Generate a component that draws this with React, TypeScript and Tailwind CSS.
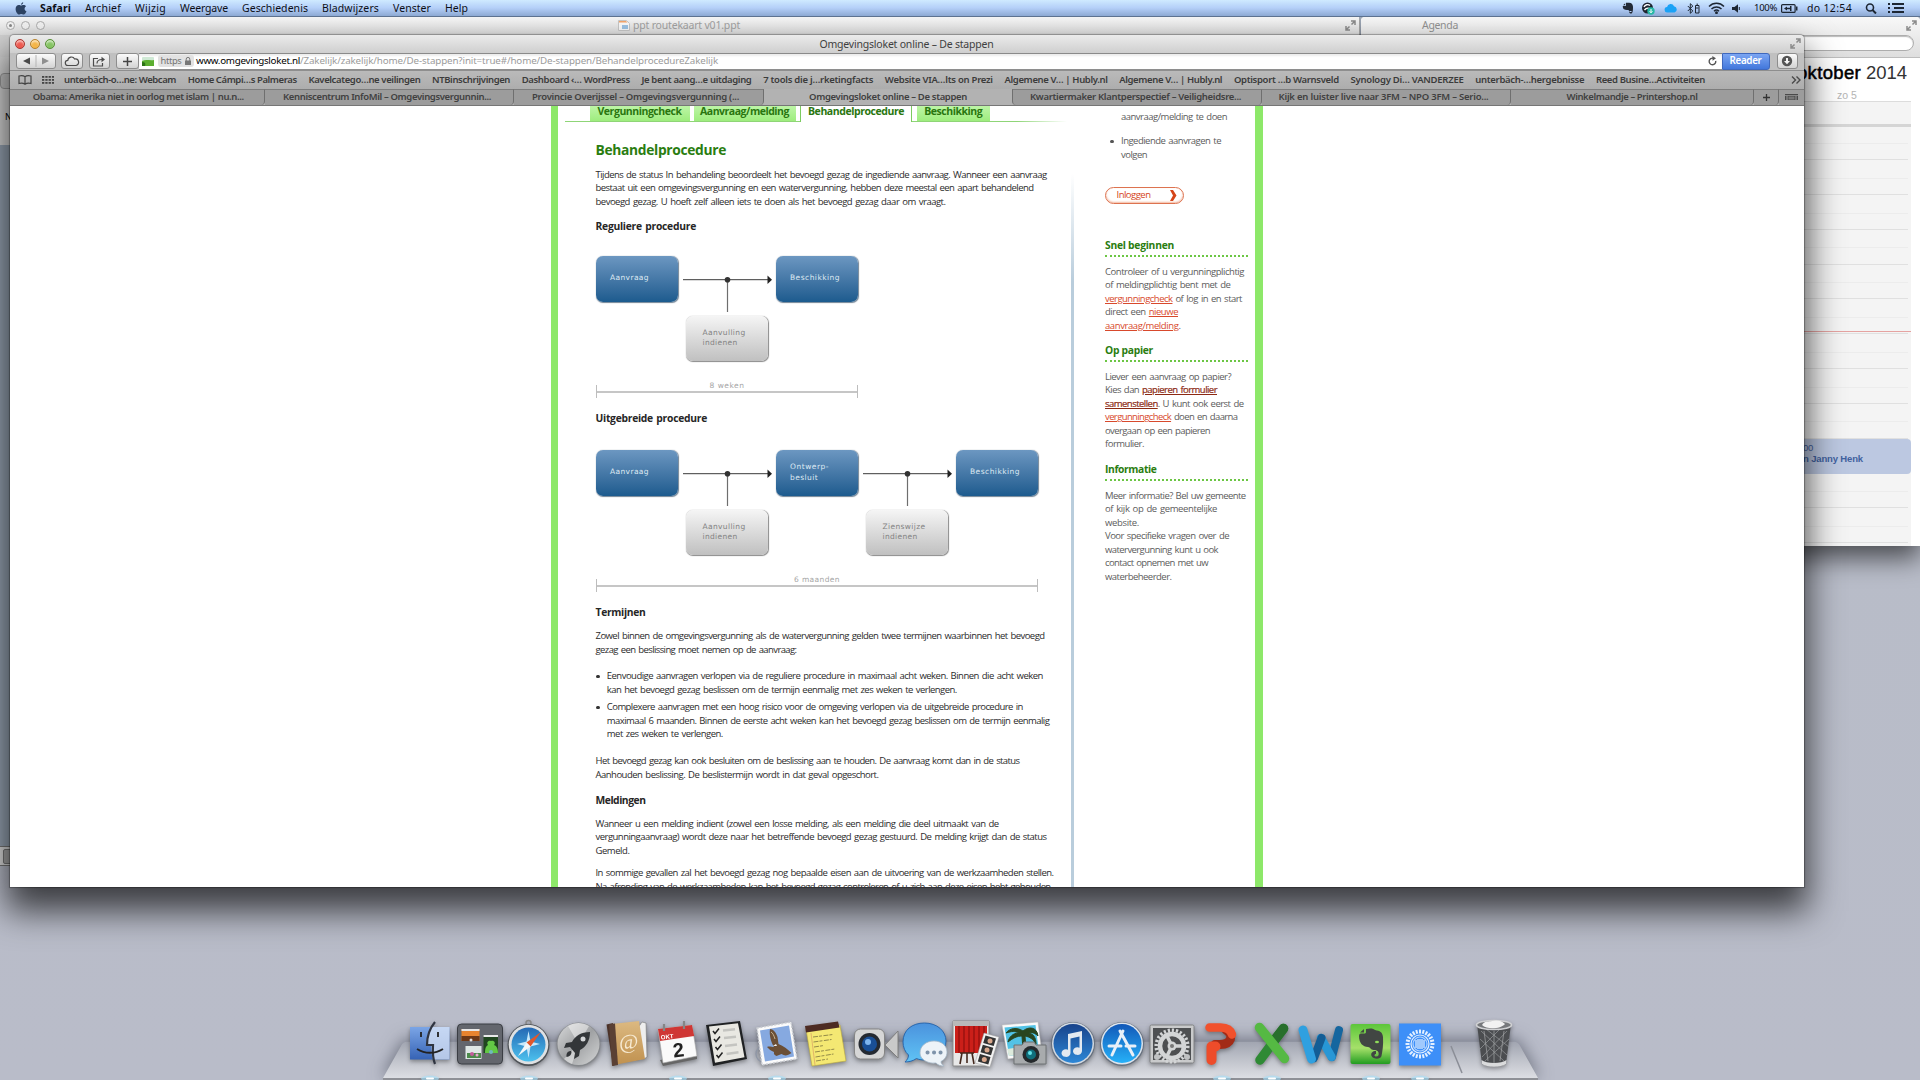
import React, { useLayoutEffect, useRef, useState } from "react";

/* Spreads a single line of text over a given width by adjusting the tracking. */
function Fit({ w, className = "", children }: { w: number; className?: string; children: React.ReactNode }) {
  const ref = useRef<HTMLSpanElement>(null);
  const [tracking, setTracking] = useState(0);
  useLayoutEffect(() => {
    const el = ref.current;
    if (!el) return;
    const count = (el.textContent || "").length || 1;
    setTracking((w - el.getBoundingClientRect().width) / count);
  }, [w]);
  return (
    <span ref={ref} className={"inline-block whitespace-nowrap " + className} style={{ letterSpacing: tracking + "px" }}>
      {children}
    </span>
  );
}

type Row = [number, React.ReactNode];

function Lines({ rows, className = "" }: { rows: Row[]; className?: string }) {
  return (
    <div className={"flex flex-col items-start [word-spacing:1px] " + className}>
      {rows.map(([w, t], i) => (
        <Fit key={i} w={w} className="h-[13.5px] leading-[13.5px]">
          {t}
        </Fit>
      ))}
    </div>
  );
}

/* ---------- menu bar ---------- */
const menus: [string, number][] = [
  ["Archief", 36],
  ["Wijzig", 31],
  ["Weergave", 48],
  ["Geschiedenis", 66],
  ["Bladwijzers", 57],
  ["Venster", 38],
  ["Help", 23],
];

function MenuBar() {
  return (
    <div className="relative z-30 flex h-[17px] items-center border-b border-[#5d7290] bg-gradient-to-b from-[#cfeaff] via-[#b4cff8] to-[#8da9d3] pl-[15px] pr-[15px] text-[10.5px] leading-[16px] text-[#0c0f16]">
      <svg className="h-[13px] w-[12px]" viewBox="0 0 12 13">
        <path d="M8.2 0.3c.1 1.2-1 2.5-2.2 2.5C5.9 1.700 7 .5 8.200.3zM6.100 3.500c.6 0 1.300-.6 2.400-.6 1 0 2 .5 2.600 1.300-2.200 1.300-1.900 4.200.4 5.100-.5 1.400-1.700 3.200-2.900 3.200-.9 0-1.200-.5-2.300-.5-1.100 0-1.500.5-2.300.5C2.600 12.500.6 9.600.6 6.900c0-2.500 1.600-3.900 3.200-3.900 1.100 0 1.800.5 2.300.5z" fill="#2c4262" />
      </svg>
      <Fit w={31} className="ml-[13px] font-bold">Safari</Fit>
      {menus.map(([t, w]) => (
        <Fit key={t} w={w} className="ml-[14px]">{t}</Fit>
      ))}
      <div className="ml-auto flex items-center">
        <svg className="h-[12px] w-[12px]" viewBox="0 0 12 12">
          <path d="M4 .8h3c2.500.2 3.800 1 4 4 .1 3-.3 6.500-1.500 6.700-1.500.1-2.500-.5-2.300-2 0-1-.6-1.500-1.500-1.500C3 8.200 1 7.500.8 5V4h2.500c.6 0 .7-.3.7-.8zM3.200 1.300v2H1z" fill="#222a36" />
          <path d="M7.500 9.500h2" stroke="#b4cff8" />
        </svg>
        <svg className="ml-[7px] h-[13px] w-[14px]" viewBox="0 0 14 13">
          <circle cx="6.500" cy="6" r="5.500" fill="#1e2530" />
          <path d="M3 5c1-2.500 4-3 6-1.500M3.500 8C5 6 8 6 10 7" stroke="#fff" strokeWidth="1.300" fill="none" />
          <circle cx="10" cy="9" r="3.700" fill="#27b9a6" />
          <path d="M10 7v3.500M8.600 9.300l1.400 1.500 1.400-1.500" stroke="#fff" fill="none" />
        </svg>
        <svg className="ml-[9px] h-[10px] w-[14px]" viewBox="0 0 14 10">
          <path d="M3.500 9.500a2.700 2.700 0 0 1-.4-5.400A3.600 3.600 0 0 1 10 3.300a3.200 3.200 0 0 1 .6 6.200z" fill="#1aa2f6" />
        </svg>
        <svg className="ml-[9px] h-[11px] w-[13px]" viewBox="0 0 13 11" fill="none" stroke="#1d2733">
          <path d="M.8 3l5 5-2.500 2.300V.7L5.800 3l-5 5" />
          <path d="M8.500 2.500h3.500v7.500H8.500zM9.500 1.200h1.500M9 5h2.500" />
        </svg>
        <svg className="ml-[8px] h-[12px] w-[17px]" viewBox="0 0 17 12" fill="none" stroke="#1d2733" strokeWidth="1.500">
          <path d="M1 4.500c4.200-4.200 10.800-4.200 15 0M3.500 7c2.800-2.700 7.200-2.700 10 0M6 9.200c1.400-1.300 3.600-1.300 5 0" />
          <circle cx="8.500" cy="10.700" r=".7" fill="#1d2733" />
        </svg>
        <svg className="ml-[7px] h-[9px] w-[9px]" viewBox="0 0 9 9">
          <path d="M0 3h2.500L6 .3v8.400L2.500 6H0z" fill="#1d2733" />
          <path d="M7.300 3v3" stroke="#1d2733" />
        </svg>
        <Fit w={23} className="ml-[13px] text-[9.5px]">100%</Fit>
        <svg className="ml-[4px] h-[9px] w-[17px]" viewBox="0 0 17 9">
          <rect x=".6" y=".6" width="13.500" height="7.800" rx="1" fill="none" stroke="#1d2733" strokeWidth="1.200" />
          <path d="M15 2.500h1.500v4H15zM3 4.500l3-2v1.200h3V2h1.500v5H9V5.300H6v1.200z" fill="#1d2733" />
        </svg>
        <Fit w={45} className="ml-[9px]">do 12:54</Fit>
        <svg className="ml-[13px] h-[11px] w-[12px]" viewBox="0 0 12 11" fill="none" stroke="#1d2733" strokeWidth="1.600">
          <circle cx="5" cy="4.500" r="3.500" />
          <path d="M7.500 7l3.500 3.500" strokeWidth="2" />
        </svg>
        <svg className="ml-[11px] h-[10px] w-[17px]" viewBox="0 0 17 10" stroke="#1d2733" strokeWidth="1.800">
          <path d="M0 1h2M4 1h12M0 5h2M6 5h10M0 9h2M4 9h12" />
        </svg>
      </div>
    </div>
  );
}

function FullscreenIcon({ className = "" }: { className?: string }) {
  return (
    <svg className={"h-[11px] w-[11px] " + className} viewBox="0 0 11 11" fill="none" stroke="#8b8b8b" strokeWidth="1.500">
      <path d="M6 1h4v4M9.800 1.200L6.500 4.500M5 10H1V6M1.200 9.800L4.500 6.500" />
    </svg>
  );
}

/* ---------- windows behind the browser ---------- */
function PptWindow() {
  return (
    <div className="absolute left-0 top-[17px] h-[128px] w-[1360px] rounded-t border-r border-[#a5a5a5] bg-[#d6d6d6]">
      <div className="flex h-[18px] items-center bg-gradient-to-b from-[#f7f7f7] to-[#dedede] pb-[2px] pl-[6px] pr-[3px] text-[10.5px] leading-[16px] text-[#a2a2a2]">
        {[0, 1, 2].map((i) => (
          <span key={i} className="mr-[6px] flex h-[9px] w-[9px] items-center justify-center rounded-full border border-[#adadad] bg-[#f3f3f3]">
            {i === 0 && <span className="h-[3px] w-[3px] rounded-full bg-[#888]" />}
          </span>
        ))}
        <svg className="ml-[567px] h-[11px] w-[12px]" viewBox="0 0 12 11">
          <path d="M.5.5h8l3 3v7H.5z" fill="#fbfbfb" stroke="#c8c8c8" />
          <path d="M1 1h7l1.500 1.500H1z" fill="#f5a66b" />
          <path d="M4 5h6v4H4z" fill="#9cc4e6" />
        </svg>
        <Fit w={107} className="ml-[3px]">ppt routekaart v01.ppt</Fit>
        <FullscreenIcon className="ml-auto" />
      </div>
      <div className="h-[22px] w-full bg-[#d2d2d2]" />
      <div className="mt-[16px] h-[16px] w-[12px] rounded-l border border-[#999] bg-[#c4c4c4]" />
      <div className="pl-[5px] pt-[22px] text-[9px] leading-[12px]">N</div>
    </div>
  );
}

const hours = Array.from({ length: 12 }, (_, i) => i);

function AgendaWindow() {
  return (
    <div className="absolute left-[1361px] top-[17px] flex h-[529px] w-[559px] flex-col overflow-hidden rounded-t bg-white shadow-[0_12px_26px_rgba(0,0,0,0.6)]">
      <div className="flex h-[18px] shrink-0 items-center bg-gradient-to-b from-[#f8f8f8] to-[#ececec] pb-[2px] pl-[61px] pr-[3px] text-[10.5px] leading-[16px] text-[#929292]">
        <Fit w={36}>Agenda</Fit>
        <FullscreenIcon className="ml-auto" />
      </div>
      <div className="flex h-[23px] shrink-0 justify-end border-b border-[#bdbdbd] bg-gradient-to-b from-[#ececec] to-[#dedede] pr-[6px]">
        <div className="h-[16px] w-[160px] rounded-full border border-[#adadad] bg-white shadow-[inset_0_1px_1px_#bbb]" />
      </div>
      <div className="flex h-[29px] shrink-0 items-center justify-end pr-[13px] font-['Liberation_Sans'] text-[18.5px] leading-[28px] text-black">
        <Fit w={64} className="[-webkit-text-stroke:0.5px_#000]">oktober</Fit>
        <Fit w={41} className="ml-[5px] text-[#333]">2014</Fit>
      </div>
      <div className="flex h-[14px] shrink-0 justify-end pr-[63px] pt-[1px] font-['Liberation_Sans'] text-[10.5px] leading-[14px] text-[#b4b4b4]">
        <Fit w={20}>zo 5</Fit>
      </div>
      <div className="relative mr-[9px] h-[445px] border-t border-[#dcdcdc] bg-[#f4f4f4]">
        <div className="h-[24.500px] border-b-[3px] border-[#d5d5d5]" />
        {hours.map((h) => (
          <div key={h} className="h-[34.800px] pr-[3px] pt-[16.500px]">
            <div className="h-[17.300px] border-b border-t border-b-[#e0e0e0] border-t-[#ececec]" />
          </div>
        ))}
        <div className="absolute left-0 top-[228.500px] h-[1.500px] w-full bg-[#e5a3a1]" />
        <div className="absolute right-0 top-[337px] h-[35px] w-[200px] rounded bg-[#bcc8e1] pl-[92px] font-['Liberation_Sans'] text-[9.500px] leading-[11px] text-[#42629f]">
          <div className="pt-[3px]">
            <Fit w={10}>00</Fit>
          </div>
          <Fit w={60} className="font-bold">n Janny Henk</Fit>
        </div>
      </div>
    </div>
  );
}

/* ---------- browser chrome ---------- */
const bookmarks: [string, number][] = [
  ["unterbäch-o…ne: Webcam", 112],
  ["Home Cámpi…s Palmeras", 109],
  ["Kavelcatego…ne veilingen", 112],
  ["NTBinschrijvingen", 78],
  ["Dashboard ‹… WordPress", 108],
  ["Je bent aang…e uitdaging", 110],
  ["7 tools die j…rketingfacts", 110],
  ["Website VIA…lts on Prezi", 108],
  ["Algemene V… | Hubly.nl", 103],
  ["Algemene V… | Hubly.nl", 103],
  ["Optisport …b Warnsveld", 105],
  ["Synology Di… VANDERZEE", 113],
  ["unterbäch-…hergebnisse", 109],
  ["Reed Busine…Activiteiten", 109],
];

const tabBase = "flex shrink-0 items-center justify-center pb-[1px] ";
const tabIdle = "rounded-br-[4px] border-r border-t border-r-[#6f6f6f] border-t-[#7d7d7d] bg-[#9c9c9c]";

function Toolbar() {
  const btn = "flex h-[16px] shrink-0 items-center justify-center rounded-[3px] border border-[#8d8d8d] bg-gradient-to-b from-[#fbfbfb] to-[#d3d3d3] ";
  return (
    <div className="flex h-[17px] bg-[#c0c0c0] pl-[6px]">
      <div className={btn + "w-[40px]"}>
        <svg className="h-[12px] w-[36px]" viewBox="0 0 36 12">
          <path d="M12 2.500v7L5 6z" fill="#4a4a4a" />
          <path d="M18 -2v16" stroke="#b5b5b5" />
          <path d="M24 2.500v7L31 6z" fill="#8f8f8f" />
        </svg>
      </div>
      <div className={btn + "ml-[5px] w-[22px]"}>
        <svg className="h-[11px] w-[16px]" viewBox="0 0 16 11">
          <path d="M4 9.500a2.600 2.600 0 0 1-.2-5.200A3.600 3.600 0 0 1 10.600 3a3.300 3.300 0 0 1 1.400 6.500z" fill="none" stroke="#4c4c4c" strokeWidth="1.200" />
        </svg>
      </div>
      <div className={btn + "ml-[6px] w-[21px]"}>
        <svg className="h-[11px] w-[14px]" viewBox="0 0 14 11" fill="none" stroke="#4c4c4c" strokeWidth="1.200">
          <path d="M6 2.500H1.500v7.500h9V7M5 7.500C5 4.500 7 3.500 10 3.500" />
          <path d="M9.500.8l3.500 2.700-3.500 2.700z" fill="#4c4c4c" stroke="none" />
        </svg>
      </div>
      <div className={btn + "ml-[6px] w-[23px]"}>
        <svg className="h-[9px] w-[9px]" viewBox="0 0 9 9" stroke="#444" strokeWidth="1.500">
          <path d="M4.500 0v9M0 4.500h9" />
        </svg>
      </div>
      <div className="flex h-[16.500px] grow items-center border-b border-t border-b-[#8e8e8e] border-t-[#8a8a8a] bg-white pl-[3px] pr-[5px] text-[9.800px] leading-[14px] text-[#9b9b9b] shadow-[inset_0_2px_2px_#ececec]">
        <svg className="h-[9px] w-[12px]" viewBox="0 0 12 9">
          <rect width="12" height="9" rx="1" fill="#cfe9d5" />
          <path d="M0 4c4-2 8 0 12-1v6H0z" fill="#5cae30" />
          <path d="M0 5c3 0 4 1.500 3 4H0z" fill="#2d7317" />
        </svg>
        <span className="ml-[4px] flex h-[12px] w-[36px] items-center justify-center rounded-[3px] bg-[#e2e2e2] text-[#747474]">
          <Fit w={21} className="text-[9.300px] leading-[12px]">https</Fit>
          <svg className="ml-[3px] h-[8px] w-[6px]" viewBox="0 0 6 8">
            <path d="M1.200 4V2.200a1.800 1.800 0 0 1 3.600 0V4" fill="none" stroke="#777" />
            <rect y="3.500" width="6" height="4.500" rx=".5" fill="#777" />
          </svg>
        </span>
        <Fit w={104} className="ml-[2.500px] text-black">www.omgevingsloket.nl</Fit>
        <Fit w={418}>/Zakelijk/zakelijk/home/De-stappen?init=true#/home/De-stappen/BehandelprocedureZakelijk</Fit>
        <svg className="ml-auto h-[10px] w-[9px]" viewBox="0 0 9 10">
          <path d="M7.700 4.800A3.300 3.300 0 1 1 5.500 2.300" fill="none" stroke="#555" strokeWidth="1.400" />
          <path d="M4.300 0L8 2.300 4.600 4.800z" fill="#555" />
        </svg>
      </div>
      <div className="flex h-[16.500px] w-[48px] items-center justify-center rounded-r-[3px] border border-[#3f68bd] bg-gradient-to-b from-[#7ba5f2] to-[#4277dc] text-[9.800px] font-semibold leading-[14px] text-white">
        <Fit w={32}>Reader</Fit>
      </div>
      <div className={btn + "ml-[7px] mr-[6px] w-[21px]"}>
        <svg className="h-[12px] w-[12px]" viewBox="0 0 12 12">
          <circle cx="6" cy="6" r="5.200" fill="#555" />
          <path d="M5 3h2v3h2L6 9.300 3 6h2z" fill="#f4f4f4" />
        </svg>
      </div>
    </div>
  );
}

function Tabs() {
  const rows: [string, number, string][] = [
    ["Obama: Amerika niet in oorlog met islam | nu.n...", 211, tabBase + tabIdle + " w-[255.500px] pl-[3px]"],
    ["Kenniscentrum InfoMil – Omgevingsvergunnin...", 208, tabBase + tabIdle + " w-[249px] pr-[4px]"],
    ["Provincie Overijssel – Omgevingsvergunning (...", 207, tabBase + tabIdle + " w-[250px] pr-[6px]"],
    ["Omgevingsloket online – De stappen", 158, tabBase + "w-[248px]"],
    ["Kwartiermaker Klantperspectief – Veiligheidsre...", 211, tabBase + tabIdle + " w-[250px] rounded-bl-[4px] border-l border-l-[#6f6f6f] pr-[3px]"],
    ["Kijk en luister live naar 3FM – NPO 3FM – Serio...", 210, tabBase + tabIdle + " w-[249px] pr-[5px]"],
    ["Winkelmandje – Printershop.nl", 131, tabBase + tabIdle + " w-[243px]"],
  ];
  return (
    <div className="flex h-[17px] border-b border-[#767676] text-[9.500px] font-semibold leading-[14px] text-[#404040]">
      {rows.map(([t, w, c]) => (
        <div key={t} className={c}>
          <Fit w={w}>{t}</Fit>
        </div>
      ))}
      <div className={tabBase + tabIdle + " w-[25px]"}>
        <svg className="h-[7px] w-[7px]" viewBox="0 0 7 7" stroke="#333" strokeWidth="1.300">
          <path d="M3.500 0v7M0 3.500h7" />
        </svg>
      </div>
      <div className={tabBase + "grow border-t border-[#7d7d7d] bg-[#9c9c9c]"}>
        <svg className="h-[6px] w-[13px]" viewBox="0 0 13 6">
          <path d="M0 0h13v1.300H0zM0 2h1.500v4H0zM2.500 2h8v4h-8zM11.500 2H13v4h-1.500z" fill="#4a4a4a" />
          <path d="M3.500 2.500h6v3h-6z" fill="#777" />
        </svg>
      </div>
    </div>
  );
}

function Light({ className }: { className: string }) {
  return <span className={"h-[10px] w-[10px] rounded-full border shadow-[inset_0_2px_2px_rgba(255,255,255,0.6)] " + className} />;
}

/* ---------- procedure diagrams ---------- */
const nodeBlue =
  "absolute top-[22px] flex h-[46.500px] w-[82px] flex-col items-start justify-center rounded-[7px] bg-gradient-to-b from-[#6c97c1] to-[#1c5b8e] pl-[14.500px] text-[#dfeaf3] shadow-[0.5px_0.5px_1px_rgba(20,50,80,0.6)]";
const nodeGrey =
  "absolute top-[82.500px] flex h-[45px] w-[82.500px] flex-col items-start justify-center rounded-[7px] bg-gradient-to-b from-[#f5f5f5] to-[#c0c0c0] pl-[17px] pb-[1px] text-[#828282] shadow-[0.5px_0.5px_1px_#8a8a8a]";

function Connector({ className }: { className: string }) {
  return (
    <svg className={"absolute top-[39.500px] h-[40px] w-[92px] " + className} viewBox="0 0 92 40">
      <path d="M0 6.700h85" stroke="#3a3a3a" strokeWidth="1" />
      <path d="M44.500 7v32" stroke="#6e6e6e" strokeWidth="1.200" />
      <circle cx="44.500" cy="6.700" r="2.800" fill="#333" />
      <path d="M84.500 2.500l4.500 4.200-4.500 4.200z" fill="#222" />
    </svg>
  );
}

function Extent({ label, w, className }: { label: string; w: number; className: string }) {
  return (
    <div className={"absolute left-[0.5px] top-[146px] flex h-[18.500px] flex-col items-center text-[#a5a5a5] " + className}>
      <Fit w={w} className="h-[11.500px] leading-[11px]">{label}</Fit>
      <div className="absolute bottom-0 left-0 h-[13px] w-full border-l border-r border-[#bdbdbd] pt-[6px]">
        <div className="h-[1.500px] bg-[#c6c6c6]" />
      </div>
    </div>
  );
}

function Regular() {
  return (
    <div className="relative h-[178.500px] w-[452px] font-['DejaVu_Sans'] text-[7.500px] leading-[10.500px]">
      <div className={nodeBlue + " left-0 pb-[2px]"}><Fit w={39}>Aanvraag</Fit></div>
      <Connector className="left-[87px]" />
      <div className={nodeBlue + " left-[180px] pb-[2px]"}><Fit w={50}>Beschikking</Fit></div>
      <div className={nodeGrey + " left-[90px]"}><Fit w={43}>Aanvulling</Fit><Fit w={35}>indienen</Fit></div>
      <Extent label="8 weken" w={35} className="w-[262px]" />
    </div>
  );
}

function Extended() {
  return (
    <div className="relative mt-[1.500px] h-[178.500px] w-[452px] font-['DejaVu_Sans'] text-[7.500px] leading-[10.500px]">
      <div className={nodeBlue + " left-0 pb-[2px]"}><Fit w={39}>Aanvraag</Fit></div>
      <Connector className="left-[87px]" />
      <div className={nodeBlue + " left-[180px]"}><Fit w={39}>Ontwerp-</Fit><Fit w={28}>besluit</Fit></div>
      <Connector className="left-[267px]" />
      <div className={nodeBlue + " left-[360px] pb-[2px]"}><Fit w={50}>Beschikking</Fit></div>
      <div className={nodeGrey + " left-[90px]"}><Fit w={43}>Aanvulling</Fit><Fit w={35}>indienen</Fit></div>
      <div className={nodeGrey + " left-[270px]"}><Fit w={43}>Zienswijze</Fit><Fit w={35}>indienen</Fit></div>
      <Extent label="6 maanden" w={46} className="w-[442px]" />
    </div>
  );
}

/* ---------- web page ---------- */
function H2({ w, children, className = "" }: { w: number; children: string; className?: string }) {
  return (
    <h2 className={"h-[14px] text-[10.300px] font-bold leading-[13px] text-[#262626] [word-spacing:1px] " + className}>
      <Fit w={w}>{children}</Fit>
    </h2>
  );
}

function Item({ rows, className = "" }: { rows: Row[]; className?: string }) {
  return (
    <li className={"flex " + className}>
      <span className="ml-[0.5px] mr-[7.300px] mt-[5.500px] h-[3.500px] w-[3.500px] rounded-full bg-[#333]" />
      <Lines rows={rows} />
    </li>
  );
}

function Main() {
  const tab = "flex h-[15.500px] items-center justify-center bg-gradient-to-b from-[#bdf5a6] to-[#9cec7b] ";
  return (
    <main className="w-[513px] shrink-0 pl-[7px]">
      <nav className="relative flex h-[16px] pl-[25px] text-[10.500px] font-bold leading-[12px] text-[#29760f]">
        <div className="absolute bottom-0 left-0 h-px w-[502px] bg-gradient-to-r from-[#8fd577] via-[#8fd577] via-90% to-white" />
        <div className={tab + "w-[100px] pb-[6px]"}><Fit w={84}>Vergunningcheck</Fit></div>
        <div className={tab + "ml-[4px] w-[102px] pb-[6px]"}><Fit w={89}>Aanvraag/melding</Fit></div>
        <div className="relative ml-[4.500px] flex h-[16px] w-[112px] items-center justify-center border-l border-r border-[#7ccb60] bg-white pb-[6px]">
          <Fit w={96}>Behandelprocedure</Fit>
        </div>
        <div className={tab + "ml-[4.500px] w-[73.500px] pb-[6px]"}><Fit w={58}>Beschikking</Fit></div>
      </nav>
      <div className="pl-[31px] text-[9.500px] text-[#2b2b2b]">
        <h1 className="mt-[18px] h-[20px] text-[13.800px] font-bold leading-[20px] text-[#2a7d10]">
          <Fit w={130.5}>Behandelprocedure</Fit>
        </h1>
        <Lines
          className="mt-[7.500px]"
          rows={[
            [451, "Tijdens de status In behandeling beoordeelt het bevoegd gezag de ingediende aanvraag. Wanneer een aanvraag"],
            [438, "bestaat uit een omgevingsvergunning en een watervergunning, hebben deze meestal een apart behandelend"],
            [350, "bevoegd gezag. U hoeft zelf alleen iets te doen als het bevoegd gezag daar om vraagt."],
          ]}
        />
        <H2 w={100.5} className="mt-[11.500px]">Reguliere procedure</H2>
        <Regular />
        <H2 w={111.5}>Uitgebreide procedure</H2>
        <Extended />
        <H2 w={50}>Termijnen</H2>
        <Lines
          className="mt-[9.300px]"
          rows={[
            [449, "Zowel binnen de omgevingsvergunning als de watervergunning gelden twee termijnen waarbinnen het bevoegd"],
            [201, "gezag een beslissing moet nemen op de aanvraag:"],
          ]}
        />
        <ul className="mt-[13.200px]">
          <Item
            rows={[
              [436, "Eenvoudige aanvragen verlopen via de reguliere procedure in maximaal acht weken. Binnen die acht weken"],
              [350, "kan het bevoegd gezag beslissen om de termijn eenmalig met zes weken te verlengen."],
            ]}
          />
          <Item
            className="mt-[3.800px]"
            rows={[
              [416, "Complexere aanvragen met een hoog risico voor de omgeving verlopen via de uitgebreide procedure in"],
              [442.5, "maximaal 6 maanden. Binnen de eerste acht weken kan het bevoegd gezag beslissen om de termijn eenmalig"],
              [116, "met zes weken te verlengen."],
            ]}
          />
        </ul>
        <Lines
          className="mt-[13.700px]"
          rows={[
            [424, "Het bevoegd gezag kan ook besluiten om de beslissing aan te houden. De aanvraag komt dan in de status"],
            [283, "Aanhouden beslissing. De beslistermijn wordt in dat geval opgeschort."],
          ]}
        />
        <H2 w={50} className="mt-[12.200px]">Meldingen</H2>
        <Lines
          className="mt-[9px]"
          rows={[
            [403, "Wanneer u een melding indient (zowel een losse melding, als een melding die deel uitmaakt van de"],
            [451, "vergunningaanvraag) wordt deze naar het betreffende bevoegd gezag gestuurd. De melding krijgt dan de status"],
            [34, "Gemeld."],
          ]}
        />
        <Lines
          className="mt-[9px]"
          rows={[
            [458, "In sommige gevallen zal het bevoegd gezag nog bepaalde eisen aan de uitvoering van de werkzaamheden stellen."],
            [457, "Na afronding van de werkzaamheden kan het bevoegd gezag controleren of u zich aan deze eisen hebt gehouden."],
          ]}
        />
      </div>
    </main>
  );
}

function Link({ children, visited = false }: { children: string; visited?: boolean }) {
  return <a className={visited ? "text-[#8c2a14] underline underline-offset-1 [-webkit-text-stroke:0.2px_#8c2a14]" : "text-[#d8492c] underline underline-offset-1"}>{children}</a>;
}

function Section({ title, w, rows, className = "" }: { title: string; w: number; rows: Row[]; className?: string }) {
  return (
    <section className={className}>
      <h3 className="h-[19px] w-[143px] border-b-2 border-dotted border-[#6cc644] text-[10.300px] font-bold leading-[14px] text-[#2a7d10]">
        <Fit w={w}>{title}</Fit>
      </h3>
      <Lines className="mt-[7.800px]" rows={rows} />
    </section>
  );
}

function Sidebar() {
  return (
    <aside className="w-[150px] shrink-0 text-[9.500px] text-[#5c5c5c]">
      <Lines className="ml-[16px] mt-[4.300px]" rows={[[106, "aanvraag/melding te doen"]]} />
      <div className="mt-[10.500px] flex">
        <span className="ml-[5px] mr-[7.500px] mt-[5.500px] h-[3.500px] w-[3.500px] rounded-full bg-[#555]" />
        <Lines rows={[[100, "Ingediende aanvragen te"], [26, "volgen"]]} />
      </div>
      <div className="mt-[25.700px] flex h-[17.500px] w-[78.500px] items-center rounded-full border border-[#dd7350] bg-white pb-[2px] pl-[10.500px] leading-[13px] text-[#d5451a] shadow-[inset_0_-1px_2px_#f3b79e]">
        <Fit w={34}>Inloggen</Fit>
        <svg className="ml-[19px] mt-[2px] h-[11px] w-[7px]" viewBox="0 0 7 11">
          <path d="M0 0h3l3.500 5.500L3 11H0l3-5.500z" fill="#d5451a" />
        </svg>
      </div>
      <Section
        className="mt-[33.500px]"
        title="Snel beginnen"
        w={69}
        rows={[
          [139, "Controleer of u vergunningplichtig"],
          [125.5, "of meldingplichtig bent met de"],
          [137, <><Link>vergunningcheck</Link> of log in en start</>],
          [73, <>direct een <Link>nieuwe</Link></>],
          [75.5, <><Link>aanvraag/melding</Link>.</>],
        ]}
      />
      <Section
        className="mt-[10.800px]"
        title="Op papier"
        w={48}
        rows={[
          [126, "Liever een aanvraag op papier?"],
          [112, <>Kies dan <Link visited>papieren formulier</Link></>],
          [138.5, <><Link visited>samenstellen</Link>. U kunt ook eerst de</>],
          [132.5, <><Link>vergunningcheck</Link> doen en daarna</>],
          [105, "overgaan op een papieren"],
          [39, "formulier."],
        ]}
      />
      <Section
        className="mt-[11px]"
        title="Informatie"
        w={51.5}
        rows={[
          [140.5, "Meer informatie? Bel uw gemeente"],
          [112, "of kijk op de gemeentelijke"],
          [34, "website."],
          [124, "Voor specifieke vragen over de"],
          [113, "watervergunning kunt u ook"],
          [103, "contact opnemen met uw"],
          [66.5, "waterbeheerder."],
        ]}
      />
    </aside>
  );
}

function SafariWindow() {
  return (
    <div className="absolute left-[9.500px] top-[35px] z-10 flex h-[852px] w-[1794px] flex-col rounded-t-[4px] bg-[#b2b2b2] shadow-[0_20px_34px_4px_rgba(0,0,0,0.68),0_0_1px_1px_rgba(0,0,0,0.3)]">
      <div className="flex h-[18px] shrink-0 items-center rounded-t-[4px] bg-gradient-to-b from-[#ebebeb] to-[#cfcfcf] pb-[1px] pl-[5px] pr-[3px]">
        <Light className="border-[#a83a34] bg-[#ee5a50]" />
        <Light className="ml-[5px] border-[#b58332] bg-[#f4b548]" />
        <Light className="ml-[5px] border-[#5a8f3a] bg-[#86c564]" />
        <Fit w={174} className="ml-[765px] text-[10.500px] leading-[16px] text-[#3f3f3f]">Omgevingsloket online – De stappen</Fit>
        <FullscreenIcon className="ml-auto" />
      </div>
      <Toolbar />
      <div className="flex h-[19px] shrink-0 items-center border-t border-[#8e8e8e] bg-gradient-to-b from-[#bababa] to-[#adadad] pb-[1px] pl-[8px] pr-[3px] text-[9.500px] font-semibold leading-[16px] text-[#3b3b3b]">
        <svg className="h-[10px] w-[14px]" viewBox="0 0 14 10" fill="none" stroke="#444" strokeWidth="1.200">
          <path d="M7 1.800C5.500.5 3 .5 1 1v7.500c2-.5 4.500-.3 6 .8 1.500-1.100 4-1.300 6-.8V1c-2-.5-4.500-.5-6 .8zM7 1.800v7.500" />
        </svg>
        <svg className="ml-[10px] h-[8px] w-[12px]" viewBox="0 0 12 8" fill="#444">
          {[0, 3, 6].map((y) => [0, 3.3, 6.6, 9.9].map((x) => <rect key={x + "-" + y} x={x} y={y} width="2.300" height="1.800" />))}
        </svg>
        <div className="ml-[10.500px] flex gap-[11.700px]">
          {bookmarks.map(([t, w], i) => (
            <Fit key={i} w={w}>{t}</Fit>
          ))}
        </div>
        <svg className="ml-auto h-[8px] w-[10px]" viewBox="0 0 10 8" fill="none" stroke="#4a4a4a" strokeWidth="1.400">
          <path d="M1 .5L4.500 4 1 7.500M5.500.5L9 4 5.500 7.500" />
        </svg>
      </div>
      <Tabs />
      <div className="flex h-[781px] overflow-hidden bg-white pl-[541px] font-['Open_Sans']">
        <div className="w-[7px] shrink-0 bg-[#8de869]" />
        <Main />
        <div className="mt-[68px] w-[3px] shrink-0 bg-gradient-to-b from-white via-[#b9cddc] via-15% to-[#b9cddc]" />
        <div className="w-[31.500px] shrink-0" />
        <Sidebar />
        <div className="w-[7.500px] shrink-0 bg-[#8de869]" />
      </div>
    </div>
  );
}

/* ---------- dock ---------- */
function DockIcon({ children, running = false }: { children?: React.ReactNode; running?: boolean }) {
  return (
    <svg className="h-[65px] w-[49.500px] shrink-0 overflow-visible drop-shadow-[0_2px_2px_rgba(0,0,0,0.35)]" viewBox="0 0 49.5 65">
      {children}
      {running && (
        <>
          <ellipse cx="25" cy="63.500" rx="9" ry="3" fill="#a9e4ff" opacity=".6" />
          <rect x="21" y="62.500" width="8" height="2" rx="1" fill="#fff" />
        </>
      )}
    </svg>
  );
}

const spokes = Array.from({ length: 24 }, (_, i) => i * 15);

function Dock() {
  return (
    <div className="absolute bottom-0 left-[383px] z-0 h-[65px] w-[1155px]">
      <svg className="absolute bottom-0 left-0 h-[39px] w-[1155px] overflow-visible drop-shadow-[0_-3px_8px_rgba(40,45,60,0.5)]" viewBox="0 0 1155 39">
        <path d="M24 .8h1107q4 0 6 4L1155 37H0L18 5q2-4.200 6-4.200z" fill="url(#shelf)" />
        <path d="M0 37h1155v2H0z" fill="#8e9096" />
        <path d="M1068 5l11 27" stroke="#8b8e97" strokeWidth="1.500" />
      </svg>
      <div className="relative flex pl-[22px]">
        <DockIcon running>
          <rect x="5" y="12" width="39.500" height="32.500" fill="url(#finder)" />
          <path d="M27 12h17.500v32.500H28c-1.500-4-1.500-8-1.500-14H22c0-7 2-14 5-18.500z" fill="#dfe8f8" opacity=".75" />
          <path d="M30 7c-5 6-8 13-8 23h6c-.5 8 0 14 2 19" fill="none" stroke="#2f3440" strokeWidth="2.200" />
          <path d="M16 17v5M33 17v5M12 34c8 5 18 5 26 0" stroke="#222" strokeWidth="1.800" fill="none" />
        </DockIcon>
        <DockIcon>
          <rect x="2.500" y="9" width="45" height="40" rx="4" fill="#63666d" stroke="#3b3e44" />
          <rect x="6.500" y="14" width="18" height="12" fill="#e8842f" />
          <path d="M6.500 14h18v2h-18z" fill="#e8e8e8" />
          <path d="M6.500 21h18v5h-18z" fill="#4c2512" opacity=".8" />
          <rect x="28.500" y="20" width="14.500" height="18" fill="#20461f" />
          <path d="M28.500 20H43v2H28.500z" fill="#e8e8e8" />
          <path d="M30 38c0-5 1-7 3-8-2-3 1-5 3-4 3-1 5 2 3 4 3 1 4 4 4 8z" fill="#63c845" />
          <rect x="10.500" y="31" width="16" height="13" fill="#dfe7e5" />
          <path d="M12 38h14v5H12z" fill="#4c8a4b" />
          <circle cx="17" cy="39" r="2" fill="#c45b9c" />
          <circle cx="22" cy="40" r="1.500" fill="#e9a6cf" />
          <circle cx="16" cy="25" r="1.500" fill="#ddd" />
          <circle cx="36" cy="37" r="2" fill="#6fb9bd" />
        </DockIcon>
        <DockIcon running>
          <circle cx="24.500" cy="8" r="2.500" fill="none" stroke="#888" strokeWidth="1.500" />
          <circle cx="24.500" cy="30" r="21" fill="#4e5257" />
          <circle cx="24.500" cy="29.500" r="19.800" fill="#dfe1e3" />
          <circle cx="24.500" cy="29.500" r="17" fill="url(#sky)" />
          <path d="M24.500 16l2 10.500L36 29l-9.500 2.500-2 11.500-2-11.500L13 29l9.500-2.500z" fill="#c7e8fb" />
          <path d="M37 17L26.500 31.500l-4-4z" fill="#e1572b" />
          <path d="M14 41l8.500-13.500 4 4z" fill="#f3f6f8" />
        </DockIcon>
        <DockIcon>
          <circle cx="24.500" cy="29.500" r="22" fill="#85888c" />
          <circle cx="24.500" cy="29" r="21" fill="url(#metal)" />
          <path d="M24.500 29L14 11a21 21 0 0 1 21 0zM24.500 29L10 44a21 21 0 0 0 8 5z" fill="#fff" opacity=".45" />
          <path d="M36 17c-9 0-15 4-18 10l-6 1-2 5 6-1 5 6-1 6 5-3 1-6c6-3 10-9 10-18z" fill="#333639" />
          <circle cx="29" cy="24" r="2.500" fill="#d4d6d8" />
          <path d="M17 36c-3 0-5 2-4.500 6 3-.5 5-2 5-5" fill="#333639" />
        </DockIcon>
        <DockIcon>
          <path d="M11 48l30-4 3-2-1-34-4-1z" fill="#eee" stroke="#777" strokeWidth=".6" />
          <path d="M3.500 9.500L10 8l4 41-4 2z" fill="#4b3229" />
          <path d="M9 9L36 6l6 38-31 6z" fill="url(#tan)" />
          <path d="M6 9.500l6-1 3 41.500-6 1z" fill="#5a4034" />
          <text x="16" y="34" fontSize="21" fill="#f7ead2" fontFamily="Liberation Serif" transform="rotate(-4 24 28)">@</text>
        </DockIcon>
        <DockIcon running>
          <path d="M7 45l37-6v5L10 51z" fill="#666" />
          <path d="M5 14l34-4 5 31-34 7z" fill="#fafafa" stroke="#aaa" strokeWidth=".6" />
          <path d="M5 14l34-4 2.200 11L7 26z" fill="#cf3634" />
          <text x="8" y="24.500" fontSize="6" fontWeight="bold" fill="#fff" fontFamily="Liberation Sans" transform="rotate(-6 8 24)">OKT</text>
          <text x="20" y="42" fontSize="20" fontWeight="bold" fill="#222" fontFamily="Liberation Sans" transform="rotate(-7 24 36)">2</text>
          <path d="M11 16V9M31 14V6" stroke="#858585" strokeWidth="2.200" />
        </DockIcon>
        <DockIcon>
          <path d="M4 10l34-4 7 38-34 7z" fill="#1f2123" />
          <path d="M7 11.500l29-3.200 6.500 34-29.500 5.500z" fill="#e9e8e2" />
          <path d="M11 16l2 2.500 4-5M12 24l2 2.500 4-5M13.500 32l2 2.500 4-5M14.500 40l2 2.500 4-5" stroke="#222" strokeWidth="1.500" fill="none" />
          <path d="M21 15.500l12-1.300M22 23l12-1.300M23 31l12-1.500M24.500 39l12-1.700" stroke="#c4c4c0" strokeWidth="2.500" />
        </DockIcon>
        <DockIcon running>
          <circle cx="12" cy="39" r="8" fill="none" stroke="#8f96a5" strokeWidth="1.500" />
          <path d="M5 13l34-6 6 37-35 6z" fill="#fbfbfb" stroke="#c9ccd2" strokeWidth="1.500" strokeDasharray="2 1.500" />
          <path d="M8 15.500l29-5 5 31-29 5z" fill="#86a9e0" />
          <path d="M18 14c3 0 6 3 7.500 8l1 7c5 2 9 5 13 9-4 3-7 3-10 1l-5 2c-2-1-3-2-2.500-4-3-1-5-3-7-5 2-1 5 0 7 0-3-5-5-12-4-18z" fill="#6b4f36" />
          <path d="M19 17c2 1 3 4 4 7" stroke="#c9b38f" fill="none" />
          <path d="M21 31l3-2 1 2z" fill="#f0f0f0" />
        </DockIcon>
        <DockIcon>
          <path d="M5 14l34-4 6 36-34 5z" fill="#f4e873" stroke="#bba93e" strokeWidth=".6" />
          <path d="M4 11l33-4.500 1.500 6L5 17.500z" fill="#4d2b22" />
          <path d="M12 22l20-2.500M12.500 27l18-2.500M13 32l10-1.500M14 37l20-3M14.500 42l18-3M15 46l12-2" stroke="#948b49" strokeWidth="1" strokeDasharray="5 1 3 1.500" />
          <path d="M10 18l4 32" stroke="#d9a064" strokeWidth=".7" />
        </DockIcon>
        <DockIcon>
          <path d="M34 30L47 16v27z" fill="#c9c9c9" stroke="#7f7f7f" />
          <rect x="3.500" y="14" width="30" height="30" rx="6" fill="#d6d6d6" stroke="#858585" />
          <circle cx="18.500" cy="29" r="11" fill="#252a31" />
          <circle cx="18.500" cy="29" r="7.500" fill="#194f96" />
          <circle cx="17" cy="27" r="3" fill="#7fb6ef" />
        </DockIcon>
        <DockIcon>
          <path d="M3 27C3 15 12 8 24.500 8S46 16 46 26s-9 19-21.500 19c-3 0-6-.5-8-1.500C13 46 9 47 5 47c2-2 3.500-4 3.500-7C5 37 3 32 3 27z" fill="url(#bubble)" stroke="#2a67ad" />
          <path d="M20 38c0-7 6-12 14-12s13 5 13 11c0 5-3 8-6 9.500 0 2 1 3 3 4.500-4 0-6-1-8-3-9 1-16-4-16-10z" fill="#edf3f8" stroke="#a5b6c7" strokeWidth=".8" />
          <path d="M27.500 37.500h.1M34 37.500h.1M40.500 37.500h.1" stroke="#7e93aa" strokeWidth="4" strokeLinecap="round" />
        </DockIcon>
        <DockIcon>
          <path d="M3 6h36v45H3z" fill="#e8e8e8" stroke="#8b8b8b" />
          <path d="M3 6h36v5H3z" fill="#b9b9b9" />
          <path d="M5 11h32v27H5z" fill="#cb1f19" />
          <path d="M9 11v27M14 11v27M19 11v27M24 11v27M29 11v27M34 11v27" stroke="#8f100e" strokeWidth="1.200" />
          <path d="M10 38h14M12 38l-2 11M22 38l2 11M17 38v10" stroke="#44281d" strokeWidth="1.600" />
          <path d="M34 18l15 4-9 30-15-4z" fill="#f3f3f3" stroke="#999" strokeWidth=".5" />
          <path d="M35.500 20.500l10.500 3-2.300 7.500-10.500-3zM32.800 29.700l10.500 3-2.300 7.500-10.500-3zM30 39l10.500 3-2.200 7.500-10.500-3z" fill="#333" />
          <circle cx="40" cy="26" r="2.500" fill="#d9a78c" />
          <circle cx="37" cy="35" r="2.500" fill="#d9a78c" />
          <circle cx="34.300" cy="44.500" r="2.500" fill="#d9a78c" />
        </DockIcon>
        <DockIcon>
          <path d="M3 10l36-3 4 32-34 5z" fill="#fafafa" stroke="#bbb" strokeWidth=".5" />
          <path d="M5.500 12.500l31-2.500 3.500 27-30 4z" fill="#52c2e5" />
          <path d="M8 34l30-4 1 7-29 4z" fill="#dceadb" />
          <path d="M24 16c-6-4-13-3-17 2 6-2 9-2 13 0-6 0-10 4-11 9 5-4 9-6 14-6l1 14h3l-1-14c5 1 8 3 11 8 0-7-3-10-7-11 3-1 6 0 9 3-1-9-9-10-15-5z" fill="#28451f" stroke="#28451f" />
          <path d="M15 30h8l2-3h10l2 3h10v19H15z" fill="#a8abad" stroke="#6f7275" />
          <circle cx="32" cy="39.500" r="8.500" fill="#25292c" />
          <circle cx="32" cy="39.500" r="5" fill="#106f7c" />
          <circle cx="31" cy="38" r="2" fill="#63e1e9" />
        </DockIcon>
        <DockIcon>
          <circle cx="24" cy="29" r="22" fill="#66707e" />
          <circle cx="24" cy="28.500" r="21" fill="#d3dae2" />
          <circle cx="24" cy="28.500" r="19.500" fill="url(#itunes)" />
          <path d="M19 19l14-3v20a4.500 3.800 0 1 1-2.500-3.300V21.500l-9 2V38a4.500 3.800 0 1 1-2.500-3.300z" fill="#e3e9f0" />
        </DockIcon>
        <DockIcon>
          <circle cx="24" cy="29" r="22" fill="#66707e" />
          <circle cx="24" cy="28.500" r="21" fill="#dde5ee" />
          <circle cx="24" cy="28.500" r="19.500" fill="url(#store)" />
          <path d="M25 16L14 40M22 16l13 24M11 31h12M28 31h9" stroke="#e8f0f8" strokeWidth="3" strokeLinecap="round" fill="none" />
        </DockIcon>
        <DockIcon>
          <rect x="2" y="10" width="44" height="38" rx="1.500" fill="#c9cacb" stroke="#808284" />
          <rect x="5" y="13" width="38" height="32" fill="#4e5052" />
          <circle cx="24" cy="31" r="12" fill="none" stroke="#d3d5d6" strokeWidth="4.500" />
          <circle cx="24" cy="31" r="15.800" fill="none" stroke="#d3d5d6" strokeWidth="3.500" strokeDasharray="2.200 1.900" />
          <path d="M24 31l-5-10M24 31h11M24 31l-5 10" stroke="#d3d5d6" strokeWidth="3.500" />
          <circle cx="24" cy="31" r="4.500" fill="#d3d5d6" />
          <circle cx="24" cy="31" r="2" fill="#777" />
          <circle cx="9" cy="42" r="3" fill="#bfc1c2" />
          <circle cx="39" cy="42" r="3" fill="#bfc1c2" />
        </DockIcon>
        <DockIcon running>
          <path d="M29 15c8 5 6 14-6 14.500h-5" fill="none" stroke="#a22b17" strokeWidth="9" strokeLinecap="round" />
          <path d="M12.500 12.500h11c6 0 10 2 11.500 7" fill="none" stroke="#f1512d" strokeWidth="8.500" strokeLinecap="round" />
          <path d="M14.500 45V31.500h4" fill="none" stroke="#ee4c2a" strokeWidth="10" strokeLinecap="round" strokeLinejoin="round" />
        </DockIcon>
        <DockIcon running>
          <path d="M36.500 13.500L13 45" stroke="#2f8a35" strokeWidth="9.500" strokeLinecap="round" />
          <path d="M36.500 13.500L26 27" stroke="#286f2c" strokeWidth="9.500" strokeLinecap="round" />
          <path d="M12.500 12.500l25 31" stroke="#55b943" strokeWidth="9.500" strokeLinecap="round" />
        </DockIcon>
        <DockIcon>
          <path d="M43 15l-7 27" stroke="#15669f" strokeWidth="8" strokeLinecap="round" />
          <path d="M25 23l10.500 19" stroke="#2797d6" strokeWidth="8.500" strokeLinecap="round" />
          <path d="M25.500 23L18 43" stroke="#135d95" strokeWidth="8" strokeLinecap="round" />
          <path d="M7 15l8.500 29" stroke="#2fa0e0" strokeWidth="9" strokeLinecap="round" />
        </DockIcon>
        <DockIcon running>
          <rect x="4.500" y="9" width="40" height="40" rx="2" fill="url(#ever)" />
          <path d="M20 14c4-1 8-.5 9 1 5 1 7.500 2 8 7 .5 8-.5 14-1.500 19-1 3.500-8 3.500-10 0-1-3 1-5 4.500-5v3c-2 0-2 2.500 0 2.500 2.500 0 3-1.500 2.500-4-.5-2-3-2.500-5-2.500-3 0-3-3-5.500-3-5 0-9-4-9-11 0-2 1-2.500 3-2.500h2.500c1.500 0 1.500-.5 1.500-4.500zM18 14v3.500h-4z" fill="#414643" />
          <ellipse cx="31" cy="27" rx="2" ry="1.300" fill="#8fdc5a" />
        </DockIcon>
        <DockIcon running>
          <rect x="4" y="8.500" width="42" height="42" fill="#3d8ff8" />
          <g stroke="#e4f0ff" strokeWidth="1.200">
            {spokes.map((a) => (
              <path key={a} d="M25 14.500v4" strokeWidth="2" transform={"rotate(" + a + " 25 29)"} />
            ))}
            <circle cx="25" cy="29" r="9" fill="none" />
            <circle cx="25" cy="29" r="7" fill="none" opacity=".7" />
            <path d="M21 25v8M23 24v10M25 24v10M27 24v10M29 25v8" />
          </g>
        </DockIcon>
        <div className="w-[24.500px] shrink-0" />
        <DockIcon>
          <path d="M8 9l5 40c4 3 20 3 24 0l5-40z" fill="#4b4d50" />
          <path d="M12 16l26 24M11 24l24 22M17 14l23 18M38 16L13 42M40 24L16 46M31 14L11 34" stroke="#8d8f92" strokeWidth=".8" />
          <path d="M15 16l4 30M25 16v32M35 16l-4 30" stroke="#a5a6a8" strokeWidth=".7" />
          <ellipse cx="25" cy="10" rx="17.500" ry="4.500" fill="#77797c" stroke="#d0d1d3" strokeWidth="1.600" />
          <path d="M13 10c3-5 7-3 10-4s10-1 13 3c-4 5-18 6-23 1z" fill="#f2f2f2" />
          <path d="M12.500 45c5 4 20 4 25 0l-.5 4c-5 3.500-19 3.500-24 0z" fill="#dadbdc" />
        </DockIcon>
      </div>
      <svg className="absolute h-0 w-0">
        <defs>
          <linearGradient id="shelf" x2="0" y2="1"><stop stopColor="#a1a5b1" /><stop offset=".5" stopColor="#c0c3cb" /><stop offset="1" stopColor="#dcdee3" /></linearGradient>
          <linearGradient id="finder" x2="0" y2="1"><stop stopColor="#7ba5e6" /><stop offset="1" stopColor="#3663b5" /></linearGradient>
          <linearGradient id="sky" x2="0" y2="1"><stop stopColor="#2569b4" /><stop offset="1" stopColor="#4cc1ee" /></linearGradient>
          <linearGradient id="metal" x2="1" y2="1"><stop stopColor="#d9dadb" /><stop offset=".5" stopColor="#9fa1a3" /><stop offset="1" stopColor="#d5d6d7" /></linearGradient>
          <linearGradient id="tan" x2="0" y2="1"><stop stopColor="#dcb981" /><stop offset="1" stopColor="#c0914f" /></linearGradient>
          <linearGradient id="bubble" x2="0" y2="1"><stop stopColor="#4b92dd" /><stop offset="1" stopColor="#5fc3f5" /></linearGradient>
          <linearGradient id="itunes" x2="0" y2="1"><stop stopColor="#18438b" /><stop offset="1" stopColor="#2d87d6" /></linearGradient>
          <linearGradient id="store" x2="0" y2="1"><stop stopColor="#1258b8" /><stop offset="1" stopColor="#26b1f8" /></linearGradient>
          <linearGradient id="ever" x2="0" y2="1"><stop stopColor="#5cc63a" /><stop offset=".6" stopColor="#a6e06a" /><stop offset="1" stopColor="#219c20" /></linearGradient>
        </defs>
      </svg>
    </div>
  );
}

export default function App() {
  return (
    <div className="relative h-[1080px] w-[1920px] overflow-hidden bg-gradient-to-b from-[#a9b4c4] via-[#b8bcc8] to-[#b9bcc9] font-['Noto_Sans',sans-serif]">
      <MenuBar />
      <div className="absolute left-0 top-[145px] h-[701px] w-[12px] bg-[#98a5b4]" />
      <div className="absolute left-0 top-[846px] h-[20px] w-[12px] border-b border-t border-[#777] bg-[#dcdcdc] pl-[3px] pt-[2px]">
        <div className="h-[15px] w-[12px] rounded-[2px] border border-[#777] bg-[#a5a5a5]" />
      </div>
      <AgendaWindow />
      <PptWindow />
      <SafariWindow />
      <Dock />
    </div>
  );
}
